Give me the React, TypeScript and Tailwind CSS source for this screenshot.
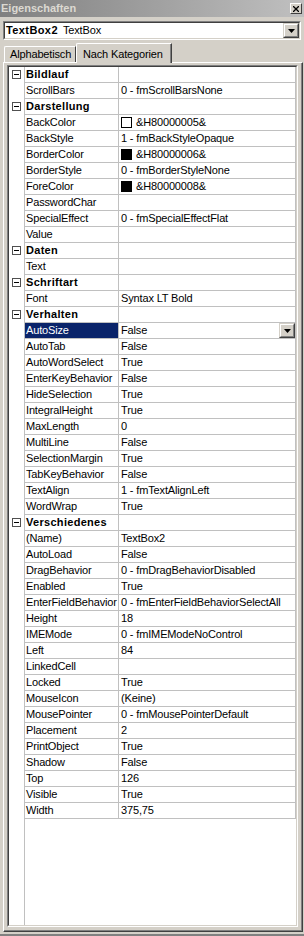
type Row = {
  name: string
  value?: string
  cat?: boolean
  swatch?: "white" | "black"
  selected?: boolean
}

const rows: Row[] = [
  { name: "Bildlauf", cat: true },
  { name: "ScrollBars", value: "0 - fmScrollBarsNone" },
  { name: "Darstellung", cat: true },
  { name: "BackColor", value: "&H80000005&", swatch: "white" },
  { name: "BackStyle", value: "1 - fmBackStyleOpaque" },
  { name: "BorderColor", value: "&H80000006&", swatch: "black" },
  { name: "BorderStyle", value: "0 - fmBorderStyleNone" },
  { name: "ForeColor", value: "&H80000008&", swatch: "black" },
  { name: "PasswordChar", value: "" },
  { name: "SpecialEffect", value: "0 - fmSpecialEffectFlat" },
  { name: "Value", value: "" },
  { name: "Daten", cat: true },
  { name: "Text", value: "" },
  { name: "Schriftart", cat: true },
  { name: "Font", value: "Syntax LT Bold" },
  { name: "Verhalten", cat: true },
  { name: "AutoSize", value: "False", selected: true },
  { name: "AutoTab", value: "False" },
  { name: "AutoWordSelect", value: "True" },
  { name: "EnterKeyBehavior", value: "False" },
  { name: "HideSelection", value: "True" },
  { name: "IntegralHeight", value: "True" },
  { name: "MaxLength", value: "0" },
  { name: "MultiLine", value: "False" },
  { name: "SelectionMargin", value: "True" },
  { name: "TabKeyBehavior", value: "False" },
  { name: "TextAlign", value: "1 - fmTextAlignLeft" },
  { name: "WordWrap", value: "True" },
  { name: "Verschiedenes", cat: true },
  { name: "(Name)", value: "TextBox2" },
  { name: "AutoLoad", value: "False" },
  { name: "DragBehavior", value: "0 - fmDragBehaviorDisabled" },
  { name: "Enabled", value: "True" },
  { name: "EnterFieldBehavior", value: "0 - fmEnterFieldBehaviorSelectAll" },
  { name: "Height", value: "18" },
  { name: "IMEMode", value: "0 - fmIMEModeNoControl" },
  { name: "Left", value: "84" },
  { name: "LinkedCell", value: "" },
  { name: "Locked", value: "True" },
  { name: "MouseIcon", value: "(Keine)" },
  { name: "MousePointer", value: "0 - fmMousePointerDefault" },
  { name: "Placement", value: "2" },
  { name: "PrintObject", value: "True" },
  { name: "Shadow", value: "False" },
  { name: "Top", value: "126" },
  { name: "Visible", value: "True" },
  { name: "Width", value: "375,75" },
]

// classic raised 3d button face
function DropButton() {
  return (
    <div className="w-[16px] h-full border border-t-[#d4d0c8] border-l-[#d4d0c8] border-r-[#404040] border-b-[#404040] bg-[#d4d0c8]">
      <div className="w-full h-full border border-t-white border-l-white border-r-[#808080] border-b-[#808080] flex items-center justify-center">
        <svg width="7" height="4" viewBox="0 0 7 4">
          <path d="M0 0h7L3.5 4z" fill="#000" />
        </svg>
      </div>
    </div>
  )
}

export default function App() {
  return (
    <div className="w-[304px] h-[936px] bg-[#d4d0c8] flex flex-col overflow-hidden font-['Liberation_Sans',Arial,sans-serif] text-[11px] text-black select-none">
      {/* title bar */}
      <div className="h-[17px] flex items-center justify-between bg-gradient-to-r from-[#808080] to-[#c0c0c0] pl-[1px] pr-[2px]">
        <span className="font-bold text-[#dcd9d2] leading-none">Eigenschaften</span>
        <div className="w-[12px] h-[11px] border border-t-white border-l-white border-r-[#404040] border-b-[#404040] bg-[#d4d0c8] flex items-center justify-center">
          <svg width="6" height="6" viewBox="0 0 6 6">
            <path d="M0 0L6 6M6 0L0 6" stroke="#000" strokeWidth="1.3" />
          </svg>
        </div>
      </div>

      {/* object combo */}
      <div className="mt-[4px] mx-[3px] h-[19px] border border-t-[#808080] border-l-[#808080] border-r-white border-b-white">
        <div className="h-full border border-t-[#404040] border-l-[#404040] border-r-[#d4d0c8] border-b-[#d4d0c8] bg-white flex items-center">
          <span className="pl-[1px] font-bold tracking-[0.4px]">TextBox2</span>
          <span className="pl-[5px] tracking-[-0.15px]">TextBox</span>
          <div className="ml-auto h-full">
            <DropButton />
          </div>
        </div>
      </div>

      {/* tabs */}
      <div className="mt-[3px] h-[19px] flex items-end pl-[4px] relative z-10">
        <div className="w-[72px] h-[16px] border-t border-l border-white border-r border-r-[#404040] rounded-tl-[2px] flex items-center pl-[5px] tracking-[-0.15px]">
          Alphabetisch
        </div>
        <div className="w-[96px] h-[20px] -mb-[1px] bg-[#d4d0c8] border-t border-l border-white border-r border-r-[#404040] shadow-[inset_-1px_0_#808080] rounded-tl-[2px] flex items-start pt-[2px] pl-[6px] tracking-[-0.15px]">
          Nach Kategorien
        </div>
      </div>

      {/* tab page */}
      <div className="flex-1 ml-[3px] mr-[1px] border border-t-white border-l-white border-r-[#404040] border-b-[#404040] flex flex-col">
        <div className="flex-1 border-r border-b border-[#808080] flex flex-col pt-[2px] pl-[3px] pr-[3px] pb-[3px]">
          {/* property grid, sunken */}
          <div className="flex-1 border border-t-[#808080] border-l-[#808080] border-r-white border-b-white flex">
            <div className="flex-1 border border-t-[#404040] border-l-[#404040] border-r-[#d4d0c8] border-b-[#d4d0c8] bg-white flex">
              <div className="w-[16px] border-r border-[#c0c0c0] flex flex-col">
                {rows.map((r) => (
                  <div key={r.name} className="h-[16px] flex items-center pl-[3px] pb-[1px]">
                    {r.cat && (
                      <div className="w-[9px] h-[9px] border border-[#505050] flex items-center justify-center">
                        <div className="w-[5px] h-[1px] bg-black" />
                      </div>
                    )}
                  </div>
                ))}
              </div>
              <div className="flex-1 flex flex-col">
                {rows.map((r) => (
                  <div key={r.name} className="h-[16px] flex border-b border-[#c0c0c0]">
                    <div
                      className={`w-[94px] border-r border-[#c0c0c0] flex items-center whitespace-nowrap overflow-hidden ${
                        r.cat ? "pl-[1px] font-bold tracking-[0.3px]" : "pl-[1px] tracking-[-0.15px]"
                      } ${r.selected ? "bg-[#0a246a] text-white" : ""}`}
                    >
                      {r.name}
                    </div>
                    <div className="flex-1 border-r border-[#c0c0c0] flex items-center pl-[2px] whitespace-nowrap overflow-hidden tracking-[-0.15px]">
                      {r.swatch && (
                        <div
                          className={`w-[11px] h-[11px] mr-[4px] border border-black shrink-0 ${
                            r.swatch === "black" ? "bg-black" : "bg-white"
                          }`}
                        />
                      )}
                      {r.value}
                      {r.selected && (
                        <div className="ml-auto h-full">
                          <DropButton />
                        </div>
                      )}
                    </div>
                  </div>
                ))}
              </div>
            </div>
          </div>
        </div>
      </div>

      {/* window bottom frame */}
      <div className="h-[4px] border-b-2 border-b-[#808080]" />
    </div>
  )
}
